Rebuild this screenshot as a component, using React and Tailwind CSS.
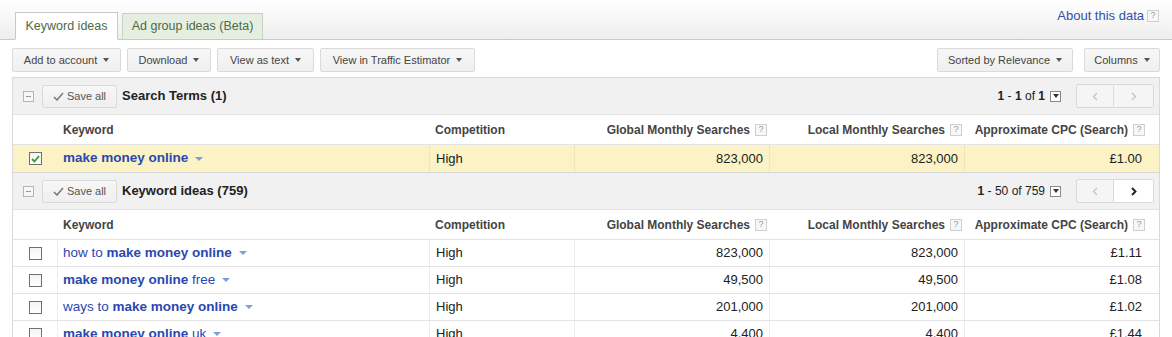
import React from "react";

const ideas = [
  { pre: "how to ", bold: "make money online", post: "", global: "823,000", local: "823,000", cpc: "£1.11" },
  { pre: "", bold: "make money online", post: " free", global: "49,500", local: "49,500", cpc: "£1.08" },
  { pre: "ways to ", bold: "make money online", post: "", global: "201,000", local: "201,000", cpc: "£1.02" },
  { pre: "", bold: "make money online", post: " uk", global: "4,400", local: "4,400", cpc: "£1.44" },
];

const cols = "grid grid-cols-[45px_372px_145px_195px_195px_1fr]";

function Caret({ color = "border-t-[#555]" }) {
  return <span className={`inline-block w-0 h-0 border-x-[3px] border-x-transparent border-t-[4px] ${color}`} />;
}

function Help() {
  return (
    <span className="inline-flex items-center justify-center w-[12px] h-[12px] border border-[#cfcfcf] bg-[#f7f7f7] text-[9px] leading-none text-[#999] font-normal">
      ?
    </span>
  );
}

function ToolButton({ label, width, caret = true }) {
  return (
    <button
      className={`${width} h-[24px] flex items-center justify-center gap-[6px] border border-[#dadada] rounded-[2px] bg-linear-to-b from-[#f7f7f7] to-[#efefef] text-[11px] text-[#444]`}
    >
      {label}
      {caret && <Caret />}
    </button>
  );
}

function Checkbox({ checked }) {
  return (
    <span className="w-[13px] h-[13px] border border-[#6f6f6f] bg-linear-to-b from-[#f4f4f4] to-white flex items-center justify-center">
      {checked && (
        <svg width="9" height="8" viewBox="0 0 9 8">
          <path d="M1 4 L3.5 6.5 L8 1" stroke="#3a9a2a" strokeWidth="1.8" fill="none" />
        </svg>
      )}
    </span>
  );
}

function Chevron({ dir, color, w = 1.4 }) {
  return (
    <svg width="6" height="9" viewBox="0 0 6 9">
      <path d={dir === "left" ? "M5 1 L1.5 4.5 L5 8" : "M1 1 L4.5 4.5 L1 8"} stroke={color} strokeWidth={w} fill="none" />
    </svg>
  );
}

function SectionHeader({ title, range, nextOn }) {
  return (
    <div className="h-[37px] border-t border-[#d9d9d9] bg-[#f1f1f1] flex items-center pl-[10px] pr-[5px]">
      <span className="w-[11px] h-[11px] border border-[#b5b5b5] bg-[#f7f7f7] flex items-center justify-center">
        <span className="w-[5px] h-px bg-[#999]" />
      </span>
      <button className="ml-[8px] w-[75px] h-[23px] border border-[#dadada] rounded-[2px] bg-linear-to-b from-[#f7f7f7] to-[#efefef] flex items-center justify-center gap-[3px] text-[11px] text-[#555]">
        <svg width="11" height="9" viewBox="0 0 11 9">
          <path d="M1 5 L4 8 L10 1" stroke="#777" strokeWidth="1.5" fill="none" />
        </svg>
        Save all
      </button>
      <span className="ml-[5px] text-[13px] font-bold text-[#222]">{title}</span>
      <div className="ml-auto flex items-center">
        <span className="text-[12px] text-[#222]">{range}</span>
        <span className="ml-[5px] w-[11px] h-[11px] border border-[#8a8a8a] bg-white flex items-center justify-center">
          <Caret color="border-t-[#333]" />
        </span>
        <div className="ml-[15px] flex h-[24px]">
          <span className="w-[38px] border border-[#dadada] rounded-l-[2px] bg-[#f5f5f5] flex items-center justify-center">
            <Chevron dir="left" color="#c4c4c4" />
          </span>
          <span
            className={`w-[40px] border border-l-0 border-[#dadada] rounded-r-[2px] flex items-center justify-center ${
              nextOn ? "bg-white" : "bg-[#f5f5f5]"
            }`}
          >
            <Chevron dir="right" color={nextOn ? "#222" : "#c4c4c4"} w={nextOn ? 1.9 : 1.4} />
          </span>
        </div>
      </div>
    </div>
  );
}

function ColumnHeader() {
  return (
    <div className={`${cols} h-[30px] border-t border-[#e3e3e3] bg-white text-[12px] font-bold text-[#444] items-center`}>
      <span />
      <span className="pl-[5px]">Keyword</span>
      <span className="pl-[5px]">Competition</span>
      <span className="flex items-center justify-end gap-[5px] pr-[3px]">
        Global Monthly Searches <Help />
      </span>
      <span className="flex items-center justify-end gap-[5px] pr-[3px]">
        Local Monthly Searches <Help />
      </span>
      <span className="flex items-center justify-end gap-[5px] pr-[14px]">
        Approximate CPC (Search) <Help />
      </span>
    </div>
  );
}

function KeywordRow({ row, selected }) {
  const line = selected ? "border-[#efe4b4]" : "border-[#ececec]";
  return (
    <div
      className={`${cols} h-[27px] border-t border-[#e3e3e3] text-[13px] text-[#222] ${
        selected ? "bg-[#fbf2c6] h-[28px]" : "bg-white"
      }`}
    >
      <span className={`flex items-center pl-[16px] ${selected ? "" : `border-r ${line}`}`}>
        <Checkbox checked={selected} />
      </span>
      <span className={`flex items-center pl-[5px] gap-[7px] text-[13.5px] text-[#2a48b0] border-r ${line}`}>
        <span>
          {row.pre}
          <b>{row.bold}</b>
          {row.post}
        </span>
        <span className="inline-block w-0 h-0 border-x-[4px] border-x-transparent border-t-[4px] border-t-[#7f9ddb]" />
      </span>
      <span className={`flex items-center pl-[6px] border-r ${line}`}>High</span>
      <span className={`flex items-center justify-end pr-[6px] border-r ${line}`}>{row.global}</span>
      <span className={`flex items-center justify-end pr-[6px] border-r ${line}`}>{row.local}</span>
      <span className="flex items-center justify-end pr-[17px]">{row.cpc}</span>
    </div>
  );
}

export default function App() {
  return (
    <div className="w-[1172px] h-[337px] overflow-hidden bg-white font-['Liberation_Sans',Arial,sans-serif]">
      <div className="h-[40px] flex items-end border-b border-[#c9c9c9] bg-linear-to-b from-white to-[#eeeeee] pl-[15px]">
        <div className="w-[103px] h-[28px] -mb-px border border-[#c8c8c8] border-b-white bg-white flex items-center justify-center text-[12.5px] text-[#4d6a45]">
          Keyword ideas
        </div>
        <div className="ml-[4px] w-[141px] h-[26px] border border-b-0 border-[#c5d3c0] bg-[#e5efe1] flex items-center justify-center text-[12.5px] text-[#4d6a45]">
          Ad group ideas (Beta)
        </div>
        <div className="ml-auto self-start mt-[6px] mr-[13px] flex items-center gap-[3px]">
          <span className="text-[13px] text-[#3150ab]">About this data</span>
          <Help />
        </div>
      </div>

      <div className="mt-[8px] mb-[5px] px-3 flex items-center gap-[6px]">
        <ToolButton label="Add to account" width="w-[109px]" />
        <ToolButton label="Download" width="w-[84px]" />
        <ToolButton label="View as text" width="w-[97px]" />
        <ToolButton label="View in Traffic Estimator" width="w-[155px]" />
        <div className="ml-auto flex gap-[11px]">
          <ToolButton label="Sorted by Relevance" width="w-[136px]" />
          <ToolButton label="Columns" width="w-[76px]" />
        </div>
      </div>

      <div className="mx-3 border-x border-[#d9d9d9]">
        <SectionHeader
          title="Search Terms (1)"
          range={
            <>
              <b>1</b> - <b>1</b> of <b>1</b>
            </>
          }
        />
        <ColumnHeader />
        <KeywordRow selected row={{ pre: "", bold: "make money online", post: "", global: "823,000", local: "823,000", cpc: "£1.00" }} />
        <SectionHeader
          title="Keyword ideas (759)"
          nextOn
          range={
            <>
              <b>1</b> - 50 of 759
            </>
          }
        />
        <ColumnHeader />
        {ideas.map((row, i) => (
          <KeywordRow key={i} row={row} />
        ))}
      </div>
    </div>
  );
}
